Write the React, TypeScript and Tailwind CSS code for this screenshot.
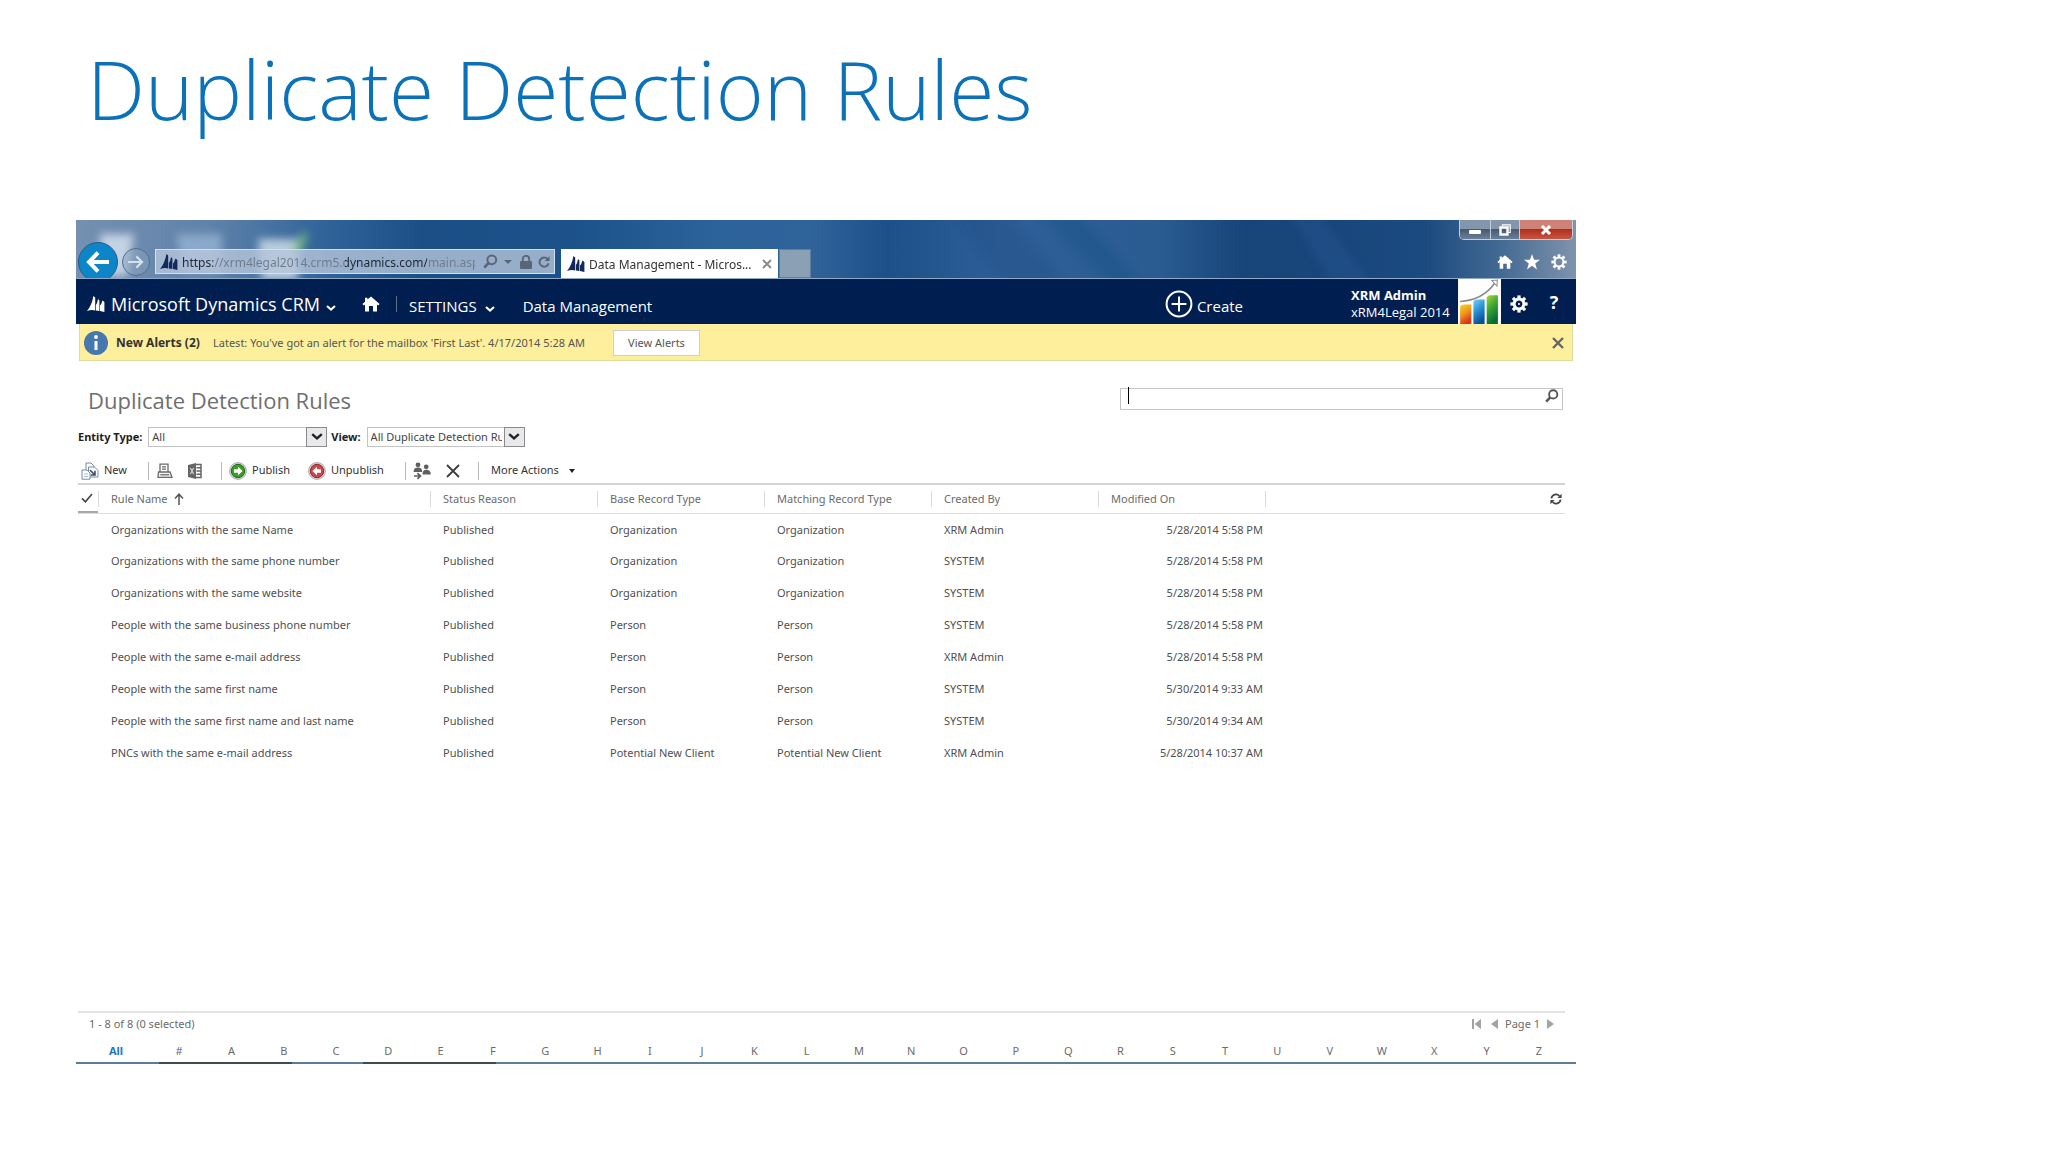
import type { ReactNode } from 'react'

type Rule = {
  name: string
  base: string
  matching: string
  createdBy: string
  modified: string
}

const rules: Rule[] = [
  { name: 'Organizations with the same Name', base: 'Organization', matching: 'Organization', createdBy: 'XRM Admin', modified: '5/28/2014 5:58 PM' },
  { name: 'Organizations with the same phone number', base: 'Organization', matching: 'Organization', createdBy: 'SYSTEM', modified: '5/28/2014 5:58 PM' },
  { name: 'Organizations with the same website', base: 'Organization', matching: 'Organization', createdBy: 'SYSTEM', modified: '5/28/2014 5:58 PM' },
  { name: 'People with the same business phone number', base: 'Person', matching: 'Person', createdBy: 'SYSTEM', modified: '5/28/2014 5:58 PM' },
  { name: 'People with the same e-mail address', base: 'Person', matching: 'Person', createdBy: 'XRM Admin', modified: '5/28/2014 5:58 PM' },
  { name: 'People with the same first name', base: 'Person', matching: 'Person', createdBy: 'SYSTEM', modified: '5/30/2014 9:33 AM' },
  { name: 'People with the same first name and last name', base: 'Person', matching: 'Person', createdBy: 'SYSTEM', modified: '5/30/2014 9:34 AM' },
  { name: 'PNCs with the same e-mail address', base: 'Potential New Client', matching: 'Potential New Client', createdBy: 'XRM Admin', modified: '5/28/2014 10:37 AM' },
]

const letters = ['#', ...'ABCDEFGHIJKLMNOPQRSTUVWXYZ']

/* ── Icons ─────────────────────────────────── */

function DynamicsLogo({ className }: { className?: string }) {
  return (
    <svg viewBox="0 0 18 16" className={className} fill="currentColor" aria-hidden="true">
      <path d="M0 15 Q5 9 6.4 0 L8.2 1.4 V14.4 Q4 13.6 0 15Z" />
      <path d="M8.9 14.4 V9 Q10.4 7 11 3 L12.4 4.4 V14.9Z" />
      <path d="M13 15 V9.4 Q14.6 8 15.4 4.4 L17.4 6 V16Z" />
    </svg>
  )
}

function HomeIcon({ className }: { className?: string }) {
  return (
    <svg viewBox="0 0 18 16" className={className} fill="currentColor" aria-hidden="true">
      <path d="M9 0.5 L17.6 8 L16.2 9.4 L15 8.4 V15.5 H11 V10 H7 V15.5 H3 V8.4 L1.8 9.4 L0.4 8 L3 5.7 V1.8 H5.4 V3.6Z" />
    </svg>
  )
}

function GearIcon({ className, dot }: { className?: string; dot?: boolean }) {
  return (
    <svg viewBox="-9 -9 18 18" className={className} aria-hidden="true">
      <g fill="currentColor">
        {[0, 45, 90, 135, 180, 225, 270, 315].map(a => (
          <rect key={a} x="-1.6" y="-8.6" width="3.2" height="4" transform={`rotate(${a})`} />
        ))}
      </g>
      <circle r="4.9" fill="none" stroke="currentColor" strokeWidth={dot ? 3 : 2.2} />
      {dot && <circle r="1" fill="currentColor" />}
    </svg>
  )
}

function SearchIcon({ className }: { className?: string }) {
  return (
    <svg viewBox="0 0 15 15" className={className} fill="none" stroke="currentColor" strokeWidth="2" aria-hidden="true">
      <circle cx="8.8" cy="5.8" r="4.4" />
      <path d="M5.6 9 L1.2 13.6" strokeWidth="2.6" />
    </svg>
  )
}

function Chevron({ className }: { className?: string }) {
  return (
    <svg viewBox="0 0 10 6" className={className} fill="none" stroke="currentColor" strokeWidth="2" aria-hidden="true">
      <path d="M1 1 L5 4.6 L9 1" />
    </svg>
  )
}

function ChartLogo() {
  return (
    <svg viewBox="0 0 42 44" className="block h-full w-full" aria-hidden="true">
      <defs>
        <linearGradient id="bar1" x1="0" y1="0" x2="0.4" y2="1">
          <stop offset="0" stopColor="#f9d21e" />
          <stop offset="0.5" stopColor="#f39a1b" />
          <stop offset="1" stopColor="#dd3320" />
        </linearGradient>
        <linearGradient id="bar2" x1="0" y1="0" x2="0.4" y2="1">
          <stop offset="0" stopColor="#7fd0f5" />
          <stop offset="0.5" stopColor="#2a93d6" />
          <stop offset="1" stopColor="#0b4f9c" />
        </linearGradient>
        <linearGradient id="bar3" x1="0" y1="0" x2="0.4" y2="1">
          <stop offset="0" stopColor="#a6d93a" />
          <stop offset="0.5" stopColor="#3aa535" />
          <stop offset="1" stopColor="#0a6b34" />
        </linearGradient>
      </defs>
      <rect width="42" height="44" fill="#fff" />
      <path d="M2 27 Q3 25 6 25 H13 V44 H2Z" fill="url(#bar1)" />
      <path d="M15 22 Q16 20 19 20 H26 V44 H15Z" fill="url(#bar2)" />
      <path d="M28 18 Q29 16 32 16 H39 V44 H28Z" fill="url(#bar3)" />
      <path d="M2 22 Q24 21 36 4" fill="none" stroke="#8b8b8b" strokeWidth="1.6" />
      <path d="M33 1.5 L38.5 1 L38 7Z" fill="#fff" stroke="#8b8b8b" />
    </svg>
  )
}

function NewIcon() {
  return (
    <svg viewBox="0 0 18 18" className="h-[18px] w-[18px]" fill="#fff" aria-hidden="true">
      <path d="M5 1 H10 L13 4 V10 H5Z" stroke="#7388a8" />
      <path d="M7.5 5 H13.5 L17 8.5 V15 H7.5Z" stroke="#7388a8" />
      <path d="M1 8 H6 L9 11 V17.2 H1Z" stroke="#7388a8" />
      <path d="M3 12 H7 M3 14.5 H7" stroke="#a9b8cf" />
      <path d="M9 8.2 L13.5 12.5 M14 8.8 V13 H9.8" stroke="#3c4f6e" strokeWidth="1.6" fill="none" />
    </svg>
  )
}

function PrintIcon() {
  return (
    <svg viewBox="0 0 16 16" className="h-4 w-4" fill="none" stroke="#6b6b6b" strokeWidth="1.3" aria-hidden="true">
      <path d="M3 9 V1.2 H11 V9" />
      <path d="M5 3.8 H9 M5 6.2 H9" />
      <path d="M1.5 9 H13 L15 14.4 H1Z" fill="#f2f2f2" />
      <path d="M3.4 11.8 H12" />
    </svg>
  )
}

function ExcelIcon() {
  return (
    <svg viewBox="0 0 14 16" className="h-4 w-3.5" aria-hidden="true">
      <path d="M0 2 L8 0 V16 L0 14Z" fill="#666" />
      <path d="M2.4 5 L5.6 11 M5.6 5 L2.4 11" stroke="#ddd" strokeWidth="1.1" />
      <path d="M8 1.5 H13 V14.5 H8 M8.5 4.7 H13 M8.5 8 H13 M8.5 11.3 H13" fill="none" stroke="#666" strokeWidth="1.5" />
    </svg>
  )
}

function ArrowBadge({ color, dark, left }: { color: string; dark: string; left?: boolean }) {
  return (
    <svg viewBox="0 0 18 18" className="h-[18px] w-[18px]" aria-hidden="true">
      <circle cx="9" cy="9" r="8.4" fill="#d9d9d9" stroke="#9b9b9b" strokeWidth="0.8" />
      <circle cx="9" cy="9" r="6.7" fill={color} stroke={dark} />
      <path
        d={left ? 'M4.4 9 L9 4.8 V7.2 H13 V10.8 H9 V13.2Z' : 'M13.6 9 L9 4.8 V7.2 H5 V10.8 H9 V13.2Z'}
        fill="#fff"
      />
    </svg>
  )
}

function AssignIcon() {
  return (
    <svg viewBox="0 0 18 18" className="h-[18px] w-[18px]" fill="#5f5f5f" aria-hidden="true">
      <circle cx="5" cy="2.8" r="2.4" />
      <path d="M0.6 10 Q0.6 5.6 5 5.6 Q9.2 5.6 9.2 10Z" />
      <circle cx="13.2" cy="4.8" r="2.4" />
      <path d="M9.6 12.4 Q9.4 7.8 13.2 7.8 Q17.8 7.8 17.8 12.4Z" />
      <path d="M1 14 H7 M4.4 11.2 L7.4 14 L4.4 16.8" fill="none" stroke="#5f5f5f" strokeWidth="1.7" />
    </svg>
  )
}

function RefreshPair() {
  return (
    <svg viewBox="0 0 12 12" className="h-3 w-3" fill="none" stroke="#444" strokeWidth="1.8" aria-hidden="true">
      <path d="M1.4 5.4 A4.6 4.6 0 0 1 9.4 3" />
      <path d="M10.6 6.6 A4.6 4.6 0 0 1 2.6 9" />
      <path d="M11.6 0.8 V5 H7.4Z M0.4 11.2 V7 H4.6Z" fill="#444" stroke="none" />
    </svg>
  )
}

/* ── Browser frame ─────────────────────────── */

function GlassBackdrop() {
  return (
    <svg viewBox="0 0 1500 58" preserveAspectRatio="none" className="absolute inset-0 h-full w-full" aria-hidden="true">
      <defs>
        <linearGradient id="glass">
          <stop offset="0" stopColor="#7590b0" />
          <stop offset="0.09" stopColor="#5f82aa" />
          <stop offset="0.17" stopColor="#2f6298" />
          <stop offset="0.23" stopColor="#1b4f86" />
          <stop offset="0.33" stopColor="#1c528a" />
          <stop offset="0.43" stopColor="#2c639a" />
          <stop offset="0.49" stopColor="#2f639a" />
          <stop offset="0.54" stopColor="#1d5088" />
          <stop offset="0.62" stopColor="#2f5f98" />
          <stop offset="0.72" stopColor="#2a5c92" />
          <stop offset="0.78" stopColor="#174479" />
          <stop offset="0.9" stopColor="#1b4a80" />
          <stop offset="0.95" stopColor="#446a93" />
          <stop offset="1" stopColor="#7f93ac" />
        </linearGradient>
        <filter id="soft" x="-50%" y="-50%" width="200%" height="200%">
          <feGaussianBlur stdDeviation="4" />
        </filter>
      </defs>
      <rect width="1500" height="58" fill="url(#glass)" />
      <g filter="url(#soft)">
        <path d="M24 14 H58 L52 56 H24Z" fill="#ccdaea" opacity="0.9" />
        <path d="M100 14 H146 V52 H108Z" fill="#9db9d6" opacity="0.7" />
        <path d="M182 19 H222 V60 H186Z" fill="#cddde8" opacity="0.85" />
        <path d="M214 30 L228 11 L232 17 L222 38Z" fill="#7cc47c" opacity="0.75" />
        <path d="M880 -10 L930 -10 L990 70 L930 70Z" fill="#174a80" opacity="0.3" />
        <path d="M960 -10 L1000 -10 L1070 70 L1040 70Z" fill="#17467c" opacity="0.2" />
        <path d="M1210 -10 L1240 -10 L1300 70 L1260 70Z" fill="#2f619a" opacity="0.25" />
      </g>
    </svg>
  )
}

function BrowserFrame() {
  return (
    <header className="relative flex h-[59px] overflow-hidden border-b border-[#8fa9c6]">
      <GlassBackdrop />
      <div className="relative flex flex-1 items-end">
        <button aria-label="Back" className="-mb-1 ml-0.5 flex h-10 w-10 items-center justify-center rounded-full border border-[#2b5a86] bg-[#0c86c8] text-white">
          <svg viewBox="0 0 24 22" className="w-6" fill="none" stroke="currentColor" strokeWidth="4" aria-hidden="true">
            <path d="M2 11 H23 M12 1.6 L3 11 L12 20.4" />
          </svg>
        </button>
        <button aria-label="Forward" className="mb-0.5 ml-1 flex h-7 w-7 items-center justify-center rounded-full border border-[#4e6f93] bg-[#8ba3bd]/50 text-[#d6e0ea]">
          <svg viewBox="0 0 16 14" className="w-4" fill="none" stroke="currentColor" strokeWidth="2.2" aria-hidden="true">
            <path d="M0 7 H14 M8.4 1.4 L14 7 L8.4 12.6" />
          </svg>
        </button>
        <div className="mb-1 ml-[5px] flex h-[25px] w-[400px] items-center border border-[#d5e0ec] bg-[#b6c6db]/80 pr-1 pl-1 text-[#5a6675]">
          <DynamicsLogo className="h-4 w-[18px] shrink-0 text-[#13295c]" />
          <input
            aria-label="Address"
            readOnly
            defaultValue="https://xrm4legal2014.crm5.dynamics.com/main.aspx"
            className="ml-1 h-full w-[298px] bg-[linear-gradient(90deg,#1f2732_31px,#6c7b8c_31px,#6c7b8c_163px,#1f2732_163px,#1f2732_245px,#6c7b8c_245px)] bg-clip-text pt-px text-xs text-transparent outline-none"
          />
          <SearchIcon className="ml-2 h-[15px] w-[15px] shrink-0" />
          <svg viewBox="0 0 8 4" className="ml-1.5 h-1 w-2 shrink-0" fill="currentColor" aria-hidden="true">
            <path d="M0 0 H8 L4 4Z" />
          </svg>
          <svg viewBox="0 0 12 14" className="ml-2 h-3.5 w-3 shrink-0" fill="currentColor" aria-hidden="true">
            <path d="M1 6 H11 Q12 6 12 7 V13 Q12 14 11 14 H1 Q0 14 0 13 V7 Q0 6 1 6Z" />
            <path d="M2.8 6.5 V4 A3.2 3.2 0 0 1 9.2 4 V6.5" fill="none" stroke="currentColor" strokeWidth="1.8" />
          </svg>
          <svg viewBox="0 0 12 12" className="ml-1.5 h-3 w-3 shrink-0" fill="none" stroke="currentColor" strokeWidth="2" aria-hidden="true">
            <path d="M9.6 3 A4.6 4.6 0 1 0 10.6 7.4" />
            <path d="M11.6 0 V5 H6.6Z" fill="currentColor" stroke="none" />
          </svg>
        </div>
        <div className="ml-1.5 flex h-[29px] w-[217px] items-center bg-white pr-1.5 pl-1.5">
          <DynamicsLogo className="h-4 w-[18px] shrink-0 text-[#13295c]" />
          <span className="ml-1 flex-1 pt-0.5 text-xs whitespace-nowrap text-[#333]">Data Management - Micros...</span>
          <button aria-label="Close tab" className="text-[#8c8c8c]">
            <svg viewBox="0 0 10 10" className="h-2.5 w-2.5" stroke="currentColor" strokeWidth="2" aria-hidden="true">
              <path d="M1 1 L9 9 M9 1 L1 9" />
            </svg>
          </button>
        </div>
        <button aria-label="New tab" className="ml-px h-[29px] w-8 border border-[#5f7f9f] bg-[#8ba0b5]" />
      </div>

      <div className="relative flex flex-col items-end pr-[3px]">
        <div className="flex h-5 overflow-hidden rounded-b-[5px] border border-t-0 border-[#c3ced9]">
          <button aria-label="Minimize" className="flex w-[31px] items-center justify-center border-r border-[#c3ced9] bg-[linear-gradient(#8496ab_45%,#43566c_45%,#6b8097)] pt-1">
            <span className="h-1 w-3 rounded-[1px] bg-white" />
          </button>
          <button aria-label="Restore" className="flex w-[29px] items-center justify-center border-r border-[#c3ced9] bg-[linear-gradient(#8496ab_45%,#43566c_45%,#6b8097)]">
            <svg viewBox="0 0 12 12" className="h-3 w-3" fill="none" stroke="#fff" aria-hidden="true">
              <path d="M3.5 2.5 V0.8 H11.2 V8.5 H9.5" strokeWidth="1.2" />
              <rect x="1.5" y="3.5" width="7" height="7" strokeWidth="2.4" />
            </svg>
          </button>
          <button aria-label="Close" className="flex w-[52px] items-center justify-center bg-[linear-gradient(#cf8277_45%,#ae2b1c_45%,#c6563f)]">
            <svg viewBox="0 0 12 10" className="h-2.5 w-3" stroke="#fff" strokeWidth="3" aria-hidden="true">
              <path d="M2 1 L10 9 M10 1 L2 9" />
            </svg>
          </button>
        </div>
        <div className="mt-3.5 mr-1.5 flex items-center gap-[11px] text-white">
          <button aria-label="Home"><HomeIcon className="h-4 w-4" /></button>
          <button aria-label="Favorites">
            <svg viewBox="0 0 16 16" className="h-4 w-4" fill="currentColor" aria-hidden="true">
              <path d="M8 0 L10 5.8 H16 L11.2 9.4 L13 15.5 L8 11.8 L3 15.5 L4.8 9.4 L0 5.8 H6Z" />
            </svg>
          </button>
          <button aria-label="Tools"><GearIcon className="h-4 w-4" /></button>
        </div>
      </div>
    </header>
  )
}

/* ── CRM navigation ────────────────────────── */

function NavBar() {
  return (
    <nav className="flex h-[45px] items-center bg-[#011e50] pt-1 font-['Open_Sans',sans-serif] text-white">
      <button className="ml-[11px] flex items-center">
        <DynamicsLogo className="h-4 w-[18px]" />
        <span className="ml-1.5 text-lg">Microsoft Dynamics CRM</span>
        <Chevron className="mt-2 ml-1.5 w-2.5" />
      </button>
      <button aria-label="Home" className="ml-[26px]"><HomeIcon className="h-4 w-[18px]" /></button>
      <span className="ml-4 h-4 w-px bg-[#5c6f93]" />
      <button className="ml-3 flex items-center pt-1.5 text-[15px] font-medium">
        SETTINGS
        <Chevron className="mt-1 ml-2 w-2.5" />
      </button>
      <a href="#data-management" className="ml-7 pt-1.5 text-[15px]">Data Management</a>

      <button className="ml-auto flex items-center">
        <svg viewBox="0 0 28 28" className="h-7 w-7" fill="none" stroke="currentColor" strokeWidth="2" aria-hidden="true">
          <circle cx="14" cy="14" r="12.4" />
          <path d="M14 6.6 V21.4 M6.6 14 H21.4" />
        </svg>
        <span className="ml-1 pt-1.5 text-[15px]">Create</span>
      </button>
      <div className="ml-[108px] w-[107px] text-[13px] leading-[17px] whitespace-nowrap">
        <p className="font-bold">XRM Admin</p>
        <p>xRM4Legal 2014</p>
      </div>
      <div className="-mt-1 h-[45px] w-[43px]"><ChartLogo /></div>
      <button aria-label="Settings" className="ml-[9px]"><GearIcon dot className="h-[18px] w-[18px]" /></button>
      <button aria-label="Help" className="mr-[15px] mb-1 ml-[19px] w-[14px] text-lg font-bold">?</button>
    </nav>
  )
}

function AlertBar() {
  return (
    <div className="mx-[3px] flex h-[37px] items-center border border-t-0 border-[#d8dc9c] bg-[#fdef9b] pt-0.5 text-[11px] text-[#555]">
      <svg viewBox="0 0 24 24" className="ml-1 h-6 w-6" aria-hidden="true">
        <circle cx="12" cy="12" r="12" fill="#4677ad" />
        <path d="M12 10 V19" stroke="#fff" strokeWidth="3" />
        <circle cx="12" cy="6" r="1.9" fill="#fff" />
      </svg>
      <strong className="ml-2 w-[97px] text-xs font-bold whitespace-nowrap text-[#333]">New Alerts (2)</strong>
      <span className="w-[400px] whitespace-nowrap">Latest: You&#39;ve got an alert for the mailbox &#39;First Last&#39;. 4/17/2014 5:28 AM</span>
      <button className="h-[26px] w-[87px] border border-[#cfcfcf] bg-white">View Alerts</button>
      <button aria-label="Dismiss" className="mr-2 ml-auto text-[#666]">
        <svg viewBox="0 0 12 12" className="h-3 w-3" stroke="currentColor" strokeWidth="2.4" aria-hidden="true">
          <path d="M1 1 L11 11 M11 1 L1 11" />
        </svg>
      </button>
    </div>
  )
}

/* ── Filters and toolbar ───────────────────── */

function Picker({ id, label, value, width }: { id: string; label: string; value: string; width: string }) {
  return (
    <div className="flex items-center">
      <label htmlFor={id} className="mr-1.5 font-bold text-[#222]">{label}</label>
      <div className={`relative h-5 ${width}`}>
        <select id={id} className="block h-5 w-full appearance-none overflow-hidden border border-[#c3c3c3] bg-white pr-[22px] pl-[3px] leading-[18px] text-[#444] outline-none">
          <option>{value}</option>
        </select>
        <span className="pointer-events-none absolute top-0 right-0 flex h-5 w-[21px] items-center justify-center border border-[#8a8a8a] bg-[#e9e9ec] text-[#222]">
          <Chevron className="w-3" />
        </span>
      </div>
    </div>
  )
}

function Separator() {
  return <span className="h-[18px] w-px bg-[#b9b9b9]" />
}

function Tool({ icon, children, label }: { icon: ReactNode; children?: string; label?: string }) {
  return (
    <button aria-label={label} className="flex items-center gap-[5px]">
      {icon}
      {children}
    </button>
  )
}

function Toolbar() {
  return (
    <div className="flex h-[31px] items-center border-b-2 border-[#d3d3d8] pt-1 text-[11px] text-[#333]">
      <div className="flex w-[70px] pl-[3px]"><Tool icon={<NewIcon />}>New</Tool></div>
      <Separator />
      <div className="flex w-[72px] gap-[15px] pl-2">
        <Tool icon={<PrintIcon />} label="Print" />
        <Tool icon={<ExcelIcon />} label="Export to Excel" />
      </div>
      <Separator />
      <div className="flex w-[183px] pl-[7px]">
        <div className="w-[79px]"><Tool icon={<ArrowBadge color="#3d9b2c" dark="#1c6b14" />}>Publish</Tool></div>
        <Tool icon={<ArrowBadge color="#c8474a" dark="#93292d" left />}>Unpublish</Tool>
      </div>
      <Separator />
      <div className="flex w-[72px] gap-[15px] pl-[7px]">
        <Tool icon={<AssignIcon />} label="Assign" />
        <Tool
          label="Delete"
          icon={
            <svg viewBox="0 0 14 14" className="h-3.5 w-3.5" stroke="#3d3d3d" strokeWidth="1.8" aria-hidden="true">
              <path d="M1 1 L13 13 M13 1 L1 13" />
            </svg>
          }
        />
      </div>
      <Separator />
      <button className="ml-3 flex items-center gap-2.5">
        More Actions
        <svg viewBox="0 0 6 4" className="h-1 w-1.5" fill="#222" aria-hidden="true"><path d="M0 0 H6 L3 4Z" /></svg>
      </button>
    </div>
  )
}

/* ── Grid ──────────────────────────────────── */

function HeadCell({ children }: { children: ReactNode }) {
  return (
    <th scope="col" className="p-0 font-normal">
      <div className="flex h-4 items-center border-l border-[#d9d9d9] pl-3">{children}</div>
    </th>
  )
}

function RulesTable() {
  return (
    <table className="w-full table-fixed border-collapse text-left text-[11px] text-[#505050]">
      <colgroup>
        <col className="w-5" />
        <col className="w-[332px]" />
        <col className="w-[167px]" />
        <col className="w-[167px]" />
        <col className="w-[167px]" />
        <col className="w-[167px]" />
        <col className="w-[167px]" />
        <col />
      </colgroup>
      <thead>
        <tr className="h-7 border-b border-[#dedee2] text-[#6b6b6b]">
          <th scope="col" className="p-0">
            <button aria-label="Select all" className="flex h-7 w-full items-center border-b-2 border-[#a9a9a9] pl-[3px]">
              <svg viewBox="0 0 12 10" className="h-2.5 w-3" fill="none" stroke="#444" strokeWidth="1.6" aria-hidden="true">
                <path d="M1 5.4 L4.4 8.8 L11 1" />
              </svg>
            </button>
          </th>
          <HeadCell>
            Rule Name
            <svg viewBox="0 0 10 12" className="ml-1.5 h-3 w-2.5" fill="none" stroke="#555" strokeWidth="1.5" aria-hidden="true">
              <path d="M5 12 V1.4 M1 5.4 L5 1.2 L9 5.4" />
            </svg>
          </HeadCell>
          <HeadCell>Status Reason</HeadCell>
          <HeadCell>Base Record Type</HeadCell>
          <HeadCell>Matching Record Type</HeadCell>
          <HeadCell>Created By</HeadCell>
          <HeadCell>Modified On</HeadCell>
          <th scope="col" className="p-0">
            <div className="flex h-4 items-center justify-end border-l border-[#d9d9d9] pr-[3px]">
              <button aria-label="Refresh"><RefreshPair /></button>
            </div>
          </th>
        </tr>
      </thead>
      <tbody>
        {rules.map(r => (
          <tr key={r.name} className="h-8">
            <td className="p-0" />
            <td className="p-0 pl-[13px]">{r.name}</td>
            <td className="p-0 pl-[13px]">Published</td>
            <td className="p-0 pl-[13px]">{r.base}</td>
            <td className="p-0 pl-[13px]">{r.matching}</td>
            <td className="p-0 pl-[13px]">{r.createdBy}</td>
            <td className="p-0 pr-0.5 text-right">{r.modified}</td>
            <td className="p-0" />
          </tr>
        ))}
      </tbody>
    </table>
  )
}

function Pager() {
  return (
    <div className="flex h-6 items-center justify-between border-t-2 border-[#e3e3e3] pr-[11px] pl-[11px] text-[11px] text-[#6b6b6b]">
      <span>1 - 8 of 8 (0 selected)</span>
      <div className="flex items-center text-[#a3a3a3]">
        <button aria-label="First page">
          <svg viewBox="0 0 9 10" className="h-2.5 w-[9px]" fill="currentColor" aria-hidden="true"><path d="M0 0 H2 V10 H0Z M9 0 V10 L2.6 5Z" /></svg>
        </button>
        <button aria-label="Previous page" className="ml-2.5">
          <svg viewBox="0 0 7 10" className="h-2.5 w-[7px]" fill="currentColor" aria-hidden="true"><path d="M7 0 V10 L0 5Z" /></svg>
        </button>
        <span className="mx-[7px] text-[#6b6b6b]">Page 1</span>
        <button aria-label="Next page">
          <svg viewBox="0 0 7 10" className="h-2.5 w-[7px]" fill="currentColor" aria-hidden="true"><path d="M0 0 V10 L7 5Z" /></svg>
        </button>
      </div>
    </div>
  )
}

function JumpBar() {
  return (
    <div className="flex h-[21px] items-center pr-[11px] pl-[3px] text-[11px] text-[#6b6b6b]">
      <button className="w-[74px] font-bold text-[#1f76c4]">All</button>
      {letters.map(l => (
        <button key={l} className="flex-1">{l}</button>
      ))}
    </div>
  )
}

export default function App() {
  return (
    <main className="bg-white pr-8 pb-20 pl-[76px] font-['Noto_Sans',sans-serif]">
      <h1 className="h-[220px] pt-[26px] pl-[11px] font-['Open_Sans',sans-serif] text-[82px] leading-[124px] font-light whitespace-nowrap text-[#0b72b9]">
        Duplicate Detection Rules
      </h1>

      <section className="w-full max-w-[1500px]">
        <BrowserFrame />
        <NavBar />
        <AlertBar />

        <div className="pr-[11px] pl-0.5">
          <div className="flex h-[66px] items-center justify-between pl-2.5">
            <h2 className="pt-3 font-['Open_Sans',sans-serif] text-[22px] text-[#6f6f6f]">Duplicate Detection Rules</h2>
            <div className="relative mt-1 mr-0.5 h-[22px] w-[443px] max-w-full">
              <input aria-label="Search for records" className="h-full w-full border border-[#c6c6c6] pr-7 pl-2 text-xs outline-none" />
              <span className="absolute top-0.5 left-2 h-[17px] w-px bg-black" />
              <button aria-label="Search" className="absolute top-1 right-1 text-[#555]"><SearchIcon className="h-3.5 w-3.5" /></button>
            </div>
          </div>
          <div className="flex h-5 items-center gap-1 text-[11px]">
            <Picker id="entity" label="Entity Type:" value="All" width="w-[179px]" />
            <Picker id="view" label="View:" value="All Duplicate Detection Rules" width="w-[158px]" />
          </div>
          <div className="mt-[7px]">
            <Toolbar />
          </div>
          <div className="min-h-[526px]">
            <RulesTable />
          </div>
          <Pager />
        </div>

        <div className="pt-1.5">
          <JumpBar />
          <div className="h-0.5 bg-[linear-gradient(90deg,#5a7c98_83px,#3f4d4a_83px,#3f4d4a_216px,#5a7c98_216px,#5a7c98_287px,#3f4d4a_287px,#3f4d4a_420px,#5d7f93_420px)]" />
        </div>
      </section>
    </main>
  )
}
